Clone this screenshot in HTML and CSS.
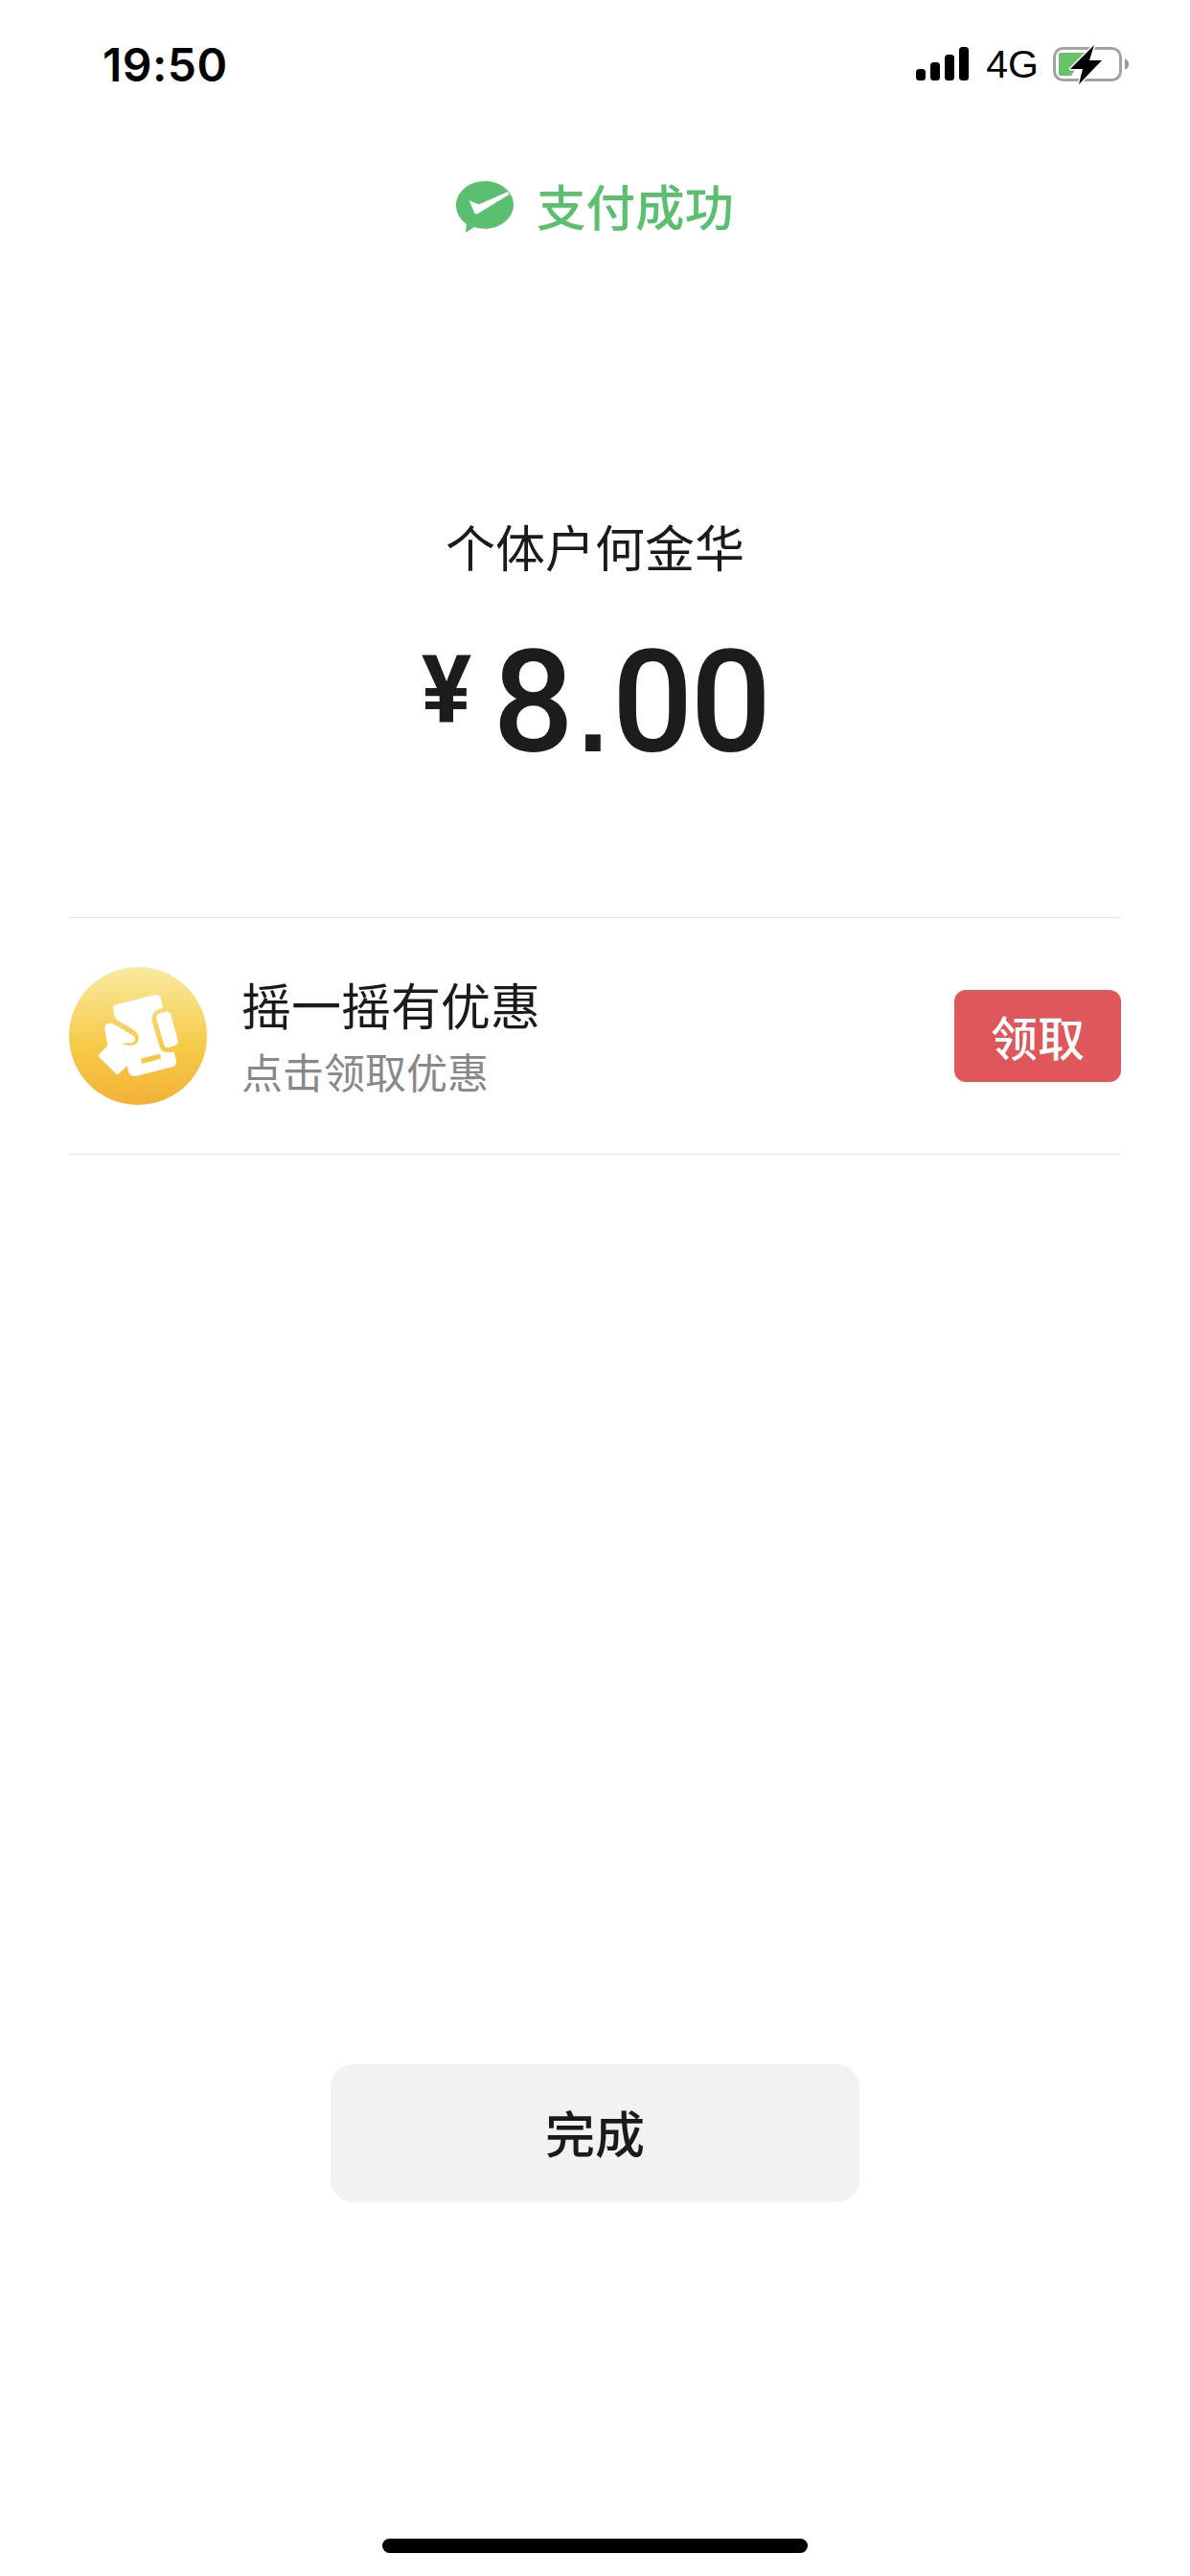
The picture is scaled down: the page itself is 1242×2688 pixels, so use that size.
FILE: index.html
```html
<!DOCTYPE html>
<html lang="zh-CN">
  <head>
    <meta charset="UTF-8" />
    <meta name="viewport" content="width=device-width, initial-scale=1.0" />
    <title>支付成功</title>
    <link rel="stylesheet" href="styles.css">
  </head>
  <body>
    <div class="page">
      <div class="status-bar">
        <span class="time">19:50</span>
        <div class="status-right">
          <svg class="signal" width="56" height="36" viewBox="0 0 56 36">
            <rect x="1" y="23" width="10" height="12" rx="3.500" />
            <rect x="16" y="16" width="10" height="19" rx="3.500" />
            <rect x="31" y="8" width="10" height="27" rx="3.500" />
            <rect x="46" y="0" width="10" height="35" rx="3.500" />
          </svg>
          <span class="network">4G</span>
          <svg class="battery" width="84" height="48" viewBox="0 0 84 48">
            <rect x="5.500" y="7.500" width="69" height="33" rx="9" fill="none" stroke="#a3a3a3" stroke-width="3" />
            <path d="M79 18.500c3 .5 4 3.500 4 5.500s-1 5-4 5.500z" fill="#999" />
            <path d="M10 14a2 2 0 0 1 2-2h26L23 36H12a2 2 0 0 1-2-2z" fill="#65c466" />
            <path d="M47 4 22 29h13l-4 16 24-25H42z" fill="#000" stroke="#fff" stroke-width="3" stroke-linejoin="round" paint-order="stroke" />
          </svg>
        </div>
      </div>

      <div class="pay-head">
        <svg class="wechat-icon" width="60" height="54" viewBox="0 0 60 54">
          <path d="M30 0C13.400 0 0 11.300 0 25.300c0 7.900 4.300 15 11 19.600l-1.200 8.900 9.200-5.800c3.400 1.100 7.100 1.700 11 1.700 16.600 0 30-11.300 30-25.200C60 11.300 46.600 0 30 0z" fill="#5ac06f" />
          <path d="M13.700 20.300 23.700 24.300 54 11 55.700 13.700 22.300 34.300 19.700 34.300z" fill="#fff" />
        </svg>
        <span class="pay-title">支付成功</span>
      </div>

      <div class="merchant">个体户何金华</div>
      <div class="amount">
        <span class="currency">¥</span>
        <span class="price">8<span class="price-dot">.</span>00</span>
      </div>

      <div class="coupon-row">
        <svg class="coupon-icon" width="144" height="144" viewBox="66 60 432 432">
          <defs>
            <linearGradient id="coinFill" x1="0" y1="0" x2="0" y2="1">
              <stop offset="0" stop-color="#f9ea9f" />
              <stop offset="0.6" stop-color="#f6c945" />
              <stop offset="1" stop-color="#f3b238" />
            </linearGradient>
          </defs>
          <circle cx="282" cy="276" r="216" fill="url(#coinFill)" />
          <path d="M205 190Q203 180 215 177L335 147Q350 145 353 158L360 188Q322 195 326 230L350 310Q358 335 395 325L402 355Q403 368 390 373L275 402Q258 403 252 388L232 300Q270 315 283 290Q290 270 265 255L215 225Q205 215 205 190z" fill="#fff" />
          <path d="M340 222Q338 208 352 205L370 200Q383 198 386 212L407 290Q410 302 397 306L380 312Q367 315 363 303z" fill="#fff" />
          <path d="M293 355 352 339" stroke="#f5c544" stroke-width="16" fill="none" />
          <path d="M178 255Q176 240 190 237Q200 235 208 240L268 275Q278 285 270 295Q262 300 232 298L248 370 217 398 157 338 187 305z" fill="#fff" />
        </svg>
        <div class="coupon-text">
          <div class="coupon-title">摇一摇有优惠</div>
          <div class="coupon-sub">点击领取优惠</div>
        </div>
        <div class="claim-btn">领取</div>
      </div>

      <div class="done-btn">完成</div>
      <div class="home-bar"></div>
    </div>
  </body>
</html>
```

FILE: styles.css
```css
body {
  margin: 0;
  background-color: #fff;
  font-family: "Noto Sans CJK SC", "Noto Sans", sans-serif;
  color: #1a1a1a;
}
.page {
  width: 1242px;
  height: 2688px;
  display: flex;
  flex-direction: column;
  align-items: center;
  overflow: hidden;
}
.status-bar {
  width: 100%;
  box-sizing: border-box;
  height: 134px;
  padding: 0 63px 0 107px;
  display: flex;
  align-items: center;
  justify-content: space-between;
  color: #000;
}
.time {
  font-family: Inter, sans-serif;
  font-size: 48px;
  font-weight: 600;
  letter-spacing: 0.5px;
}
.status-right {
  display: flex;
  align-items: center;
}
.network {
  font-family: "Liberation Sans", sans-serif;
  font-size: 41px;
  margin-left: 18px;
  margin-right: 11px;
}
.pay-head {
  height: 164px;
  display: flex;
  align-items: center;
}
.pay-title {
  margin-left: 24px;
  padding-bottom: 4px;
  font-size: 51.500px;
  font-weight: 500;
  line-height: 60px;
  color: #5ac06f;
}
.merchant {
  margin-top: 237px;
  font-size: 52px;
  line-height: 70px;
}
.amount {
  margin-top: 38px;
  display: flex;
  align-items: flex-start;
  font-family: Roboto, sans-serif;
  color: #1c1c1c;
}
.currency {
  margin-top: 28px;
  margin-right: 22px;
  font-size: 98px;
  font-weight: 700;
  line-height: 100px;
}
.price {
  font-size: 149px;
  font-weight: 500;
  line-height: 180px;
  letter-spacing: -3px;
}
.price-dot {
  font-family: "Liberation Sans", sans-serif;
  font-size: 165px;
  font-weight: 400;
  line-height: 0;
}
.coupon-row {
  box-sizing: border-box;
  width: 1098px;
  height: 248px;
  margin-top: 134px;
  border-top: 1.500px solid #e6e6e6;
  border-bottom: 1.500px solid #e6e6e6;
  display: flex;
  align-items: center;
}
.coupon-icon {
  flex-shrink: 0;
}
.coupon-text {
  flex: 1;
  margin-left: 36px;
  padding-bottom: 3px;
}
.coupon-title {
  font-size: 52px;
  line-height: 68px;
}
.coupon-sub {
  margin-top: 7px;
  font-size: 43px;
  line-height: 56px;
  color: #888;
}
.claim-btn {
  width: 174px;
  height: 96px;
  line-height: 96px;
  text-align: center;
  background-color: #e0575b;
  border-radius: 12px;
  color: #fff;
  font-size: 49px;
  font-weight: 500;
}
.done-btn {
  margin-top: auto;
  width: 552px;
  height: 144px;
  line-height: 142px;
  text-align: center;
  background-color: #f2f2f2;
  border-radius: 24px;
  font-size: 52px;
  font-weight: 500;
}
.home-bar {
  width: 444px;
  height: 15px;
  margin-top: 351px;
  margin-bottom: 24px;
  background-color: #000;
  border-radius: 8px;
}
```
